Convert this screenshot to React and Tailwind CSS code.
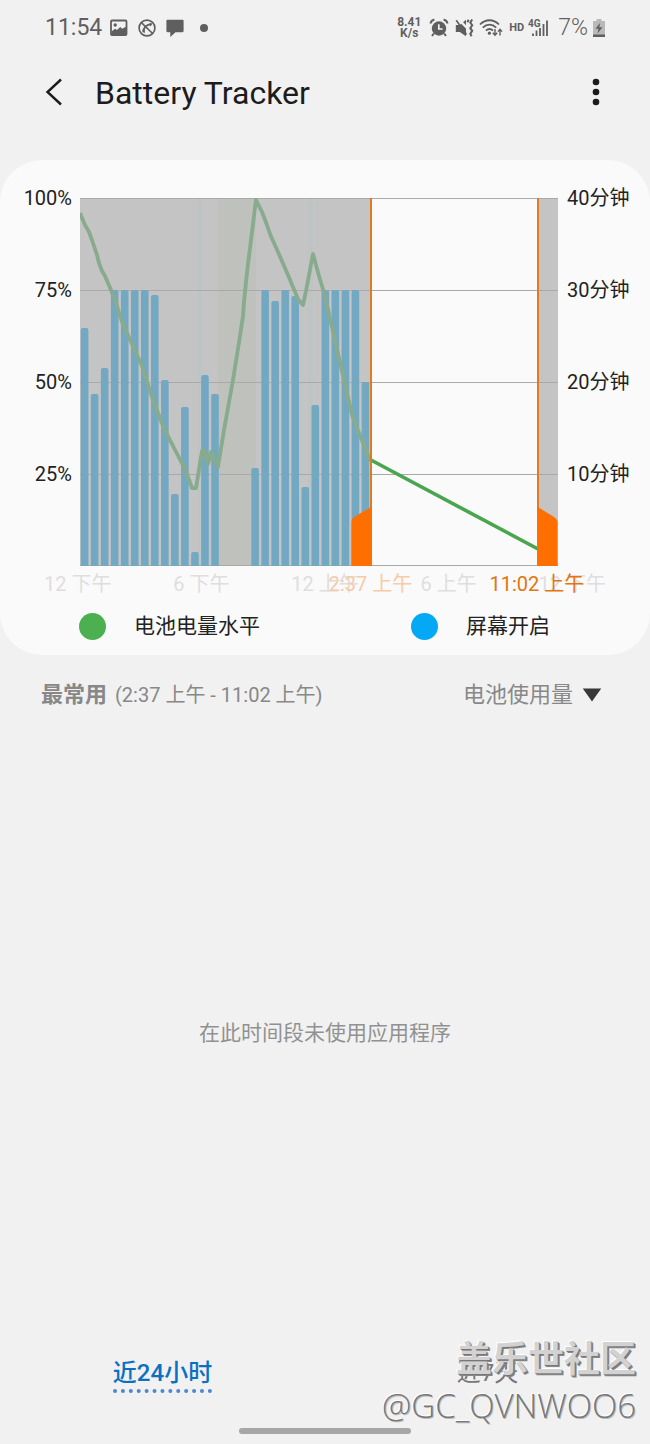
import React, { useState } from "react";

const PERCENT_LABELS = ["100%", "75%", "50%", "25%"];
const MINUTE_LABELS = ["40分钟", "30分钟", "20分钟", "10分钟"];
const HOUR_LABELS = ["12 下午", "6 下午", "12 上午", "6 上午", "12 下午"];

// Screen-on bars: [slot, height]. The plot is 478 x 368, one slot is 10 wide.
const BARS = [
  [0, 238], [1, 172], [2, 198], [3, 276], [4, 276], [5, 276], [6, 276],
  [7, 271], [8, 186], [9, 72], [10, 159], [11, 14], [12, 191], [13, 172],
  [17, 98], [18, 276], [19, 265], [20, 276], [21, 270], [22, 79], [23, 161],
  [24, 276], [25, 276], [26, 276], [27, 276], [28, 184],
];

const LEVEL_PAST =
  "0,15 5,27 9,34 12,42 14,48 17,57 19,65 22,73 25,78 31,92 36,105 42,124 52,146 62,168 72,199 83,228 94,250 105,271 112,290 116,290 122,253 125,253 128,266 131,254 138,269 144,232 153,182 160,138 163,118 164,104 166,84 168,66 176,2 178,6 182,14 187,27 190,36 198,54 208,77 218,101 223,107 226,93 233,56 239,78 245,98 256,147 272,217 283,245 290,262";

const TABS = ["近24小时", "近7天"];

function NotificationIcons() {
  return (
    <div className="ml-2 flex items-center">
      <svg width="18" height="18" viewBox="0 0 18 18">
        <rect x="1" y="1.5" width="15.5" height="14.5" rx="1" fill="none" stroke="currentColor" strokeWidth="1.8" />
        <circle cx="5.2" cy="6" r="1.7" fill="currentColor" />
        <path d="M1.5 12.5l3.5-2.7 2 1.2 3.2-3 2 1.8L16 7.8V16H1.5z" fill="currentColor" />
      </svg>
      <svg className="ml-2.5" width="18" height="18" viewBox="0 0 18 18" fill="none" stroke="currentColor">
        <circle cx="9" cy="9" r="7.9" strokeWidth="1.7" />
        <path d="M3.4 3.6l11.2 10.9" strokeWidth="1.6" />
        <path d="M5.3 13.2c.2-4.5 3.2-7.9 8.2-8" strokeWidth="2" />
        <path d="M4.2 11.2l2.8.2-.5 3.1zM11.5 3.8l2.8 1-2 2.8z" fill="currentColor" stroke="none" />
      </svg>
      <svg className="ml-2.5" width="18" height="18" viewBox="0 0 18 18">
        <path
          d="M1.5.8h15c.6 0 1.1.5 1.1 1.1v10.2c0 .6-.5 1.100-1.1 1.1H9.500L4.3 18v-4.800H1.500c-.6 0-1.1-.5-1.1-1.1V1.900C.4 1.300.9.8 1.500.8z"
          fill="currentColor"
        />
      </svg>
      <span className="ml-4 h-2 w-2 rounded-full bg-[#5f5f5f]" />
    </div>
  );
}

function StatusBar() {
  return (
    <div className="flex h-14 items-center justify-between pl-[45px] pr-11 text-[#5f5f5f]">
      <div className="flex items-center">
        <span className="text-[23px]">11:54</span>
        <NotificationIcons />
      </div>
      <div className="flex items-center">
        <div className="text-center text-[12px] font-bold leading-[11px]">
          <div>8.41</div>
          <div>K/s</div>
        </div>
        <svg className="ml-2" width="20" height="20" viewBox="0 0 20 20" fill="none" stroke="currentColor">
          <circle cx="10" cy="10.5" r="7.2" fill="currentColor" stroke="none" />
          <path d="M1.4 5.4C1.9 3.4 3.4 2 5.4 1.5M18.6 5.4c-.5-2-2-3.4-4-3.9" strokeWidth="1.9" />
          <path d="M4.8 15.5L3 18M15.2 15.5L17 18" strokeWidth="2" />
          <path d="M9.8 6.2v4.8h3.8" stroke="#f1f1f1" strokeWidth="1.7" />
        </svg>
        <svg className="ml-1.5" width="20" height="20" viewBox="0 0 20 20" fill="none" stroke="currentColor">
          <path d="M.8 7h4L11 1.8v16.4L4.8 14H.8z" fill="currentColor" stroke="none" />
          <path d="M3.500 1.200L12 10" stroke="#f1f1f1" strokeWidth="2.4" />
          <path d="M1.2 2.200L11.500 16.500" strokeWidth="1.6" />
          <path d="M13.6 1.800L12.400 4.300M17.200 1.500l-1.900 3 1.900 2.700-1.900 3 1.900 2.700-1.900 3 1.300 2.300" strokeWidth="2" />
        </svg>
        <svg className="ml-1" width="24" height="20" viewBox="0 0 24 20" fill="none" stroke="currentColor">
          <path d="M1 6.5C6.5.8 14.5.8 20 6.5M3.8 9.7c4-4 9.4-4 13.4 0M6.9 12.6c2.2-2 5-2 7.2 0" strokeWidth="1.8" />
          <circle cx="10.4" cy="15.2" r="1.6" fill="currentColor" stroke="none" />
          <path d="M16 11v6M13.8 14.8l2.2 2.4 2.2-2.4M21 17.5v-6M18.9 13.6l2.1-2.3 2.1 2.3" strokeWidth="1.4" />
        </svg>
        <span className="ml-1.5 text-[11px] font-bold">HD</span>
        <svg className="ml-1" width="22" height="20" viewBox="0 0 22 20">
          <text x="0" y="9" fontSize="10" fontWeight="700" fill="currentColor">4G</text>
          <path d="M5 15.500V18M8.500 12.500V18M12 10V18M15.500 6V18M19 2.500V18" stroke="currentColor" strokeWidth="1.8" />
        </svg>
        <span className="ml-2 text-[23px] font-light">7%</span>
        <svg className="ml-1" width="14" height="18" viewBox="0 0 14 18">
          <path d="M4.5 0h5v2H13v16H1V2h3.5z" fill="#b9b9b9" />
          <path d="M1 15.5h12V18H1z" fill="#5f5f5f" />
          <path d="M8.2 3.8L3.5 9.8h3l-1 4.7 5-6.3H7.300z" fill="#5f5f5f" />
        </svg>
      </div>
    </div>
  );
}

function Header() {
  return (
    <header className="flex h-[72px] items-center justify-between pl-[45px] pr-11 text-[#1c1c1c]">
      <div className="flex items-center">
        <button aria-label="返回">
          <svg width="18" height="28" viewBox="0 0 18 28" fill="none" stroke="currentColor" strokeWidth="2.4">
            <path d="M16 1.500L2.500 14 16 26.500" />
          </svg>
        </button>
        <h1 className="ml-8 pt-0.5 text-[32px] leading-10">Battery Tracker</h1>
      </div>
      <button aria-label="更多选项">
        <svg width="20" height="28" viewBox="0 0 20 28" fill="currentColor">
          <circle cx="10" cy="4" r="3.3" />
          <circle cx="10" cy="14" r="3.3" />
          <circle cx="10" cy="24" r="3.3" />
        </svg>
      </button>
    </header>
  );
}

function Plot() {
  return (
    <svg className="block h-full w-full" viewBox="0 0 478 368" preserveAspectRatio="none">
      {/* everything outside the selected range is dimmed */}
      <rect x="0" y="0" width="291" height="368" fill="#c4c4c4" />
      <rect x="458" y="0" width="20" height="368" fill="#c4c4c4" />
      <rect x="138" y="0" width="38" height="368" fill="#bec1bc" />
      <rect x="117" y="0" width="5" height="368" fill="#bec3c3" />
      <rect x="228" y="0" width="5" height="368" fill="#bec3c3" />

      <path d="M0 .5h478M0 92.5h478M0 184.5h478M0 276.5h478M0 367.5h478" stroke="#a9a9a9" />

      {BARS.map(([slot, height]) => (
        <path
          key={slot}
          d={`M${slot * 10.03 + 0.8} 368v${2 - height}q0-2 2-2h3.6q2 0 2 2v${height - 2}z`}
          fill="#73a8c2"
        />
      ))}

      <polyline points={LEVEL_PAST} fill="none" stroke="#87ab8c" strokeWidth="3.8" strokeLinejoin="round" />
      <path d="M290 261.5L458 351" stroke="#4aa64e" strokeWidth="3.6" />

      <path d="M291 0v368M458 0v368" stroke="#e27a20" strokeWidth="2" />
      <path d="M292 308.5L275 318.5q-3.5 2-3.5 6V368H292z" fill="#ff6f00" />
      <path d="M457 308.5l17 10.5q3.500 2 3.500 6V368H457z" fill="#ff6f00" />
    </svg>
  );
}

function AxisLabels({ labels, className }) {
  return (
    <div className={`-mt-3 flex flex-col ${className}`}>
      {labels.map((label) => (
        <span key={label} className="h-[92px] leading-6">
          {label}
        </span>
      ))}
    </div>
  );
}

function ChartCard() {
  return (
    <section className="mt-8 rounded-[42px] bg-[#fafafa] pb-[13px] pt-[38px] text-[20px] text-[#222]">
      <div className="flex h-[368px]">
        <AxisLabels labels={PERCENT_LABELS} className="w-20 pr-2 text-right" />
        <div className="h-full min-w-0 flex-1">
          <Plot />
        </div>
        <AxisLabels labels={MINUTE_LABELS} className="w-[92px] pl-[9px]" />
      </div>

      <div className="relative mt-1 leading-7">
        <div className="grid grid-cols-5 px-4 text-center text-[#dedede]">
          {HOUR_LABELS.map((label, i) => (
            <span key={i}>{label}</span>
          ))}
        </div>
        <span className="absolute left-[57%] top-0 -translate-x-1/2 whitespace-nowrap text-[#f6cba6]">
          2:37 上午
        </span>
        <span className="absolute left-[82.6%] top-0 -translate-x-1/2 whitespace-nowrap text-[#e2750f]">
          11:02 上午
        </span>
      </div>

      <div className="mt-3 flex pl-[79px] text-[21px] leading-8">
        <div className="flex w-[332px] items-center gap-7">
          <span className="h-[27px] w-[27px] rounded-full bg-[#4caf50]" />
          电池电量水平
        </div>
        <div className="flex items-center gap-7">
          <span className="h-[27px] w-[27px] rounded-full bg-[#03a9f4]" />
          屏幕开启
        </div>
      </div>
    </section>
  );
}

function UsageHeader() {
  const [sort, setSort] = useState("battery");

  return (
    <div className="mt-6 flex items-center justify-between pl-[41px] pr-12 leading-8 text-[#888]">
      <h2 className="flex items-center gap-2 text-[20px]">
        <strong className="text-[22px] font-bold">最常用</strong>
        <span>(2:37 上午 - 11:02 上午)</span>
      </h2>
      <div className="flex items-center gap-2">
        <select
          aria-label="排序方式"
          value={sort}
          onChange={(e) => setSort(e.target.value)}
          className="appearance-none bg-transparent text-[22px]"
        >
          <option value="battery">电池使用量</option>
        </select>
        <svg width="20" height="14" viewBox="0 0 20 14">
          <path d="M.8.5h18.4L10 13.5z" fill="#383838" />
        </svg>
      </div>
    </div>
  );
}

export default function App() {
  const [tab, setTab] = useState(TABS[0]);

  return (
    <div className="relative flex min-h-screen flex-col bg-[#f1f1f1] font-[Roboto,'Noto_Sans_CJK_SC',sans-serif]">
      <StatusBar />
      <Header />
      <ChartCard />
      <UsageHeader />

      <main className="flex flex-1 items-center justify-center text-[21px] text-[#919191]">
        <p>在此时间段未使用应用程序</p>
      </main>

      <nav className="flex text-[24px] leading-8">
        {TABS.map((name) => (
          <button key={name} onClick={() => setTab(name)} className="flex flex-1 justify-center">
            <span
              className={
                name === tab
                  ? "border-b-4 border-dotted border-[#4f86d0] font-medium text-[#0b70c2]"
                  : "text-[#777]"
              }
            >
              {name}
            </span>
          </button>
        ))}
      </nav>
      <div className="mx-auto mb-2.5 mt-[35px] h-1.5 w-[172px] rounded-full bg-[#a6a6a6]" />

      {/* community watermark */}
      <div className="pointer-events-none absolute bottom-4 right-3.5 text-right">
        <div className="text-[36px] font-bold leading-[48px] text-[#d2d2d2] [text-shadow:1px_1px_0_#777,2px_2px_0_#888,-1px_-1px_0_#fff]">
          盖乐世社区
        </div>
        <div className="font-['Open_Sans',sans-serif] text-[33px] font-light leading-[44px] text-[#777] [text-shadow:-1px_-1px_0_#fff,1px_1px_0_#bbb]">
          @GC_QVNWOO6
        </div>
      </div>
    </div>
  );
}
